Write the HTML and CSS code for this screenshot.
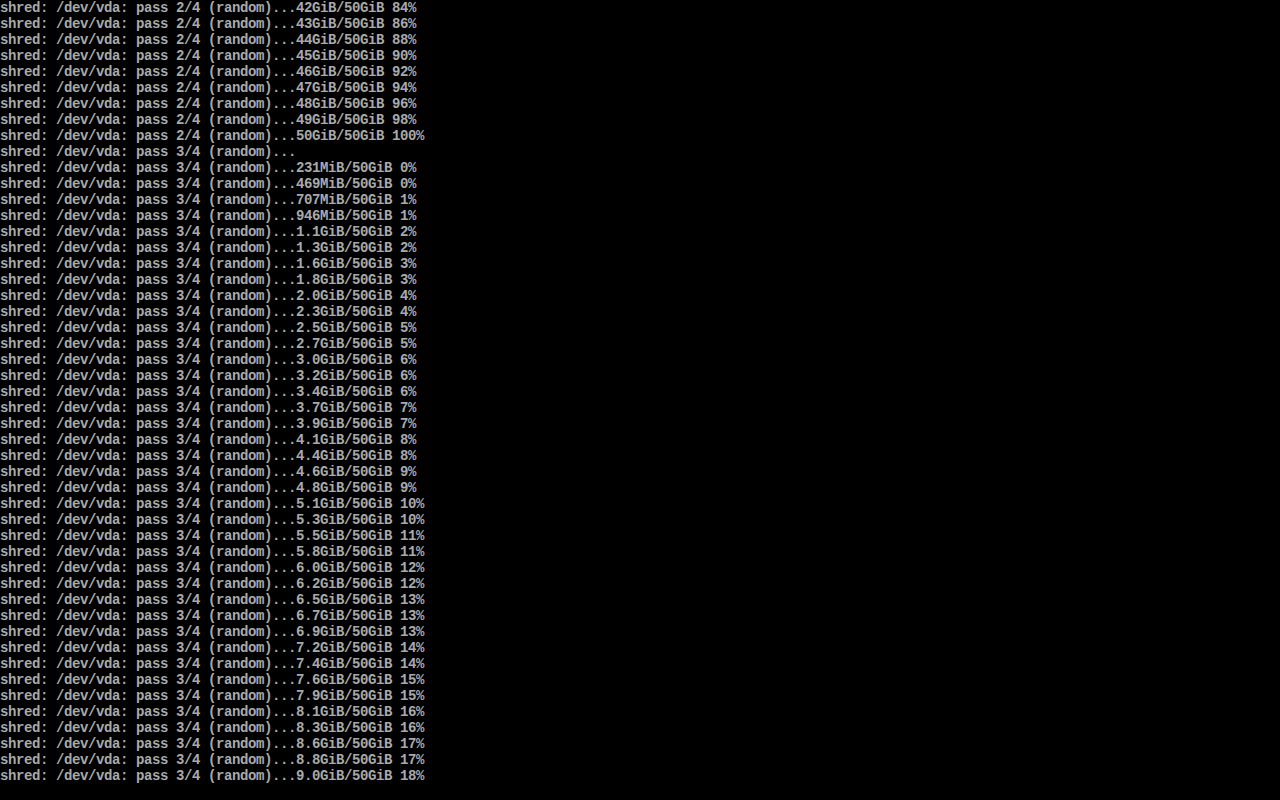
FILE: index.html
```html
<!DOCTYPE html>
<html lang="en">
<head>
    <meta charset="UTF-8">
    <meta name="viewport" content="width=device-width, initial-scale=1.0">
    <title>tty1</title>
    <link rel="stylesheet" href="styles.css">
</head>
<body>
<pre class="console">shred: /dev/vda: pass 2/4 (random)...42GiB/50GiB 84%
shred: /dev/vda: pass 2/4 (random)...43GiB/50GiB 86%
shred: /dev/vda: pass 2/4 (random)...44GiB/50GiB 88%
shred: /dev/vda: pass 2/4 (random)...45GiB/50GiB 90%
shred: /dev/vda: pass 2/4 (random)...46GiB/50GiB 92%
shred: /dev/vda: pass 2/4 (random)...47GiB/50GiB 94%
shred: /dev/vda: pass 2/4 (random)...48GiB/50GiB 96%
shred: /dev/vda: pass 2/4 (random)...49GiB/50GiB 98%
shred: /dev/vda: pass 2/4 (random)...50GiB/50GiB 100%
shred: /dev/vda: pass 3/4 (random)...
shred: /dev/vda: pass 3/4 (random)...231MiB/50GiB 0%
shred: /dev/vda: pass 3/4 (random)...469MiB/50GiB 0%
shred: /dev/vda: pass 3/4 (random)...707MiB/50GiB 1%
shred: /dev/vda: pass 3/4 (random)...946MiB/50GiB 1%
shred: /dev/vda: pass 3/4 (random)...1.1GiB/50GiB 2%
shred: /dev/vda: pass 3/4 (random)...1.3GiB/50GiB 2%
shred: /dev/vda: pass 3/4 (random)...1.6GiB/50GiB 3%
shred: /dev/vda: pass 3/4 (random)...1.8GiB/50GiB 3%
shred: /dev/vda: pass 3/4 (random)...2.0GiB/50GiB 4%
shred: /dev/vda: pass 3/4 (random)...2.3GiB/50GiB 4%
shred: /dev/vda: pass 3/4 (random)...2.5GiB/50GiB 5%
shred: /dev/vda: pass 3/4 (random)...2.7GiB/50GiB 5%
shred: /dev/vda: pass 3/4 (random)...3.0GiB/50GiB 6%
shred: /dev/vda: pass 3/4 (random)...3.2GiB/50GiB 6%
shred: /dev/vda: pass 3/4 (random)...3.4GiB/50GiB 6%
shred: /dev/vda: pass 3/4 (random)...3.7GiB/50GiB 7%
shred: /dev/vda: pass 3/4 (random)...3.9GiB/50GiB 7%
shred: /dev/vda: pass 3/4 (random)...4.1GiB/50GiB 8%
shred: /dev/vda: pass 3/4 (random)...4.4GiB/50GiB 8%
shred: /dev/vda: pass 3/4 (random)...4.6GiB/50GiB 9%
shred: /dev/vda: pass 3/4 (random)...4.8GiB/50GiB 9%
shred: /dev/vda: pass 3/4 (random)...5.1GiB/50GiB 10%
shred: /dev/vda: pass 3/4 (random)...5.3GiB/50GiB 10%
shred: /dev/vda: pass 3/4 (random)...5.5GiB/50GiB 11%
shred: /dev/vda: pass 3/4 (random)...5.8GiB/50GiB 11%
shred: /dev/vda: pass 3/4 (random)...6.0GiB/50GiB 12%
shred: /dev/vda: pass 3/4 (random)...6.2GiB/50GiB 12%
shred: /dev/vda: pass 3/4 (random)...6.5GiB/50GiB 13%
shred: /dev/vda: pass 3/4 (random)...6.7GiB/50GiB 13%
shred: /dev/vda: pass 3/4 (random)...6.9GiB/50GiB 13%
shred: /dev/vda: pass 3/4 (random)...7.2GiB/50GiB 14%
shred: /dev/vda: pass 3/4 (random)...7.4GiB/50GiB 14%
shred: /dev/vda: pass 3/4 (random)...7.6GiB/50GiB 15%
shred: /dev/vda: pass 3/4 (random)...7.9GiB/50GiB 15%
shred: /dev/vda: pass 3/4 (random)...8.1GiB/50GiB 16%
shred: /dev/vda: pass 3/4 (random)...8.3GiB/50GiB 16%
shred: /dev/vda: pass 3/4 (random)...8.6GiB/50GiB 17%
shred: /dev/vda: pass 3/4 (random)...8.8GiB/50GiB 17%
shred: /dev/vda: pass 3/4 (random)...9.0GiB/50GiB 18%</pre>
</body>
</html>
```

FILE: styles.css
```css
html, body {
    margin: 0;
    padding: 0;
    background: #000;
    height: 100%;
    overflow: hidden;
}
.console {
    margin: 0;
    padding: 0;
    color: #aaaaaa;
    font-family: "Liberation Mono", "DejaVu Sans Mono", monospace;
    font-size: 14px;
    font-weight: bold;
    letter-spacing: -0.4px;
    line-height: 16px;
    white-space: pre;
}
```
